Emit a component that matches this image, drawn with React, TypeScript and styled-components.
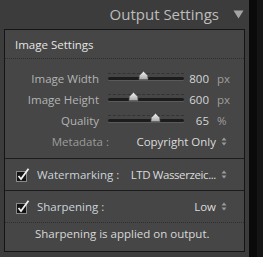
import React from "react";
import styled, { createGlobalStyle } from "styled-components";

const GlobalStyle = createGlobalStyle`
  html, body {
    margin: 0;
    padding: 0;
    background: #3c3c3c;
  }
  body {
    font-family: "Open Sans", "Liberation Sans", sans-serif;
  }
`;

const sliders = [
  { label: "Image Width", value: "800", unit: "px", pos: 0.46 },
  { label: "Image Height", value: "600", unit: "px", pos: 0.33 },
  { label: "Quality", value: "65", unit: "%", pos: 0.62 },
];

const Thumb = () => (
  <svg width="11" height="9" viewBox="0 0 11 9">
    <defs>
      <linearGradient id="tg" x1="0" y1="0" x2="0" y2="1">
        <stop offset="0" stopColor="#f4f4f4" />
        <stop offset="1" stopColor="#a8a8a8" />
      </linearGradient>
    </defs>
    <path d="M5.5 0.5 L9.5 4.5 L10 8.5 L1 8.5 L1.5 4.5 Z" fill="url(#tg)" stroke="#6a6a6a" strokeWidth="0.6" />
  </svg>
);

const Arrows = () => (
  <svg width="6" height="9" viewBox="0 0 6 9">
    <path d="M3 0.5 L5.5 3.5 L0.5 3.5 Z" fill="#9a9a9a" />
    <path d="M3 8.5 L5.5 5.5 L0.5 5.5 Z" fill="#9a9a9a" />
  </svg>
);

const Check = () => (
  <svg width="14" height="14" viewBox="0 0 14 14">
    <rect x="0.5" y="3.5" width="10" height="10" fill="#141414" stroke="#8a8a8a" />
    <path d="M2.5 8 L5 11 L12.5 0.8" fill="none" stroke="#f0f0f0" strokeWidth="1.8" />
  </svg>
);

const App = () => {
  return (
    <>
      <GlobalStyle />
      <Page>
        <Main>
          <Header>
            <HeaderTitle>Output Settings</HeaderTitle>
            <svg width="11" height="9" viewBox="0 0 11 9">
              <path d="M0.5 0.5 L10.5 0.5 L5.5 8.5 Z" fill="#a4a4a4" />
            </svg>
          </Header>
          <Panel>
            <SectionTitle>Image Settings</SectionTitle>
            <SliderGroup>
              {sliders.map((s) => (
                <SliderRow key={s.label}>
                  <Label>{s.label}</Label>
                  <Track>
                    <Groove />
                    <ThumbWrap style={{ left: `${s.pos * 100}%` }}>
                      <Thumb />
                    </ThumbWrap>
                  </Track>
                  <Value>{s.value}</Value>
                  <Unit>{s.unit}</Unit>
                </SliderRow>
              ))}
              <MetaRow>
                <MetaLabel>Metadata :</MetaLabel>
                <Select>
                  Copyright Only <Arrows />
                </Select>
              </MetaRow>
            </SliderGroup>
            <CheckRow>
              <Check />
              <CheckLabel>Watermarking :</CheckLabel>
              <Select $tight>
                LTD Wasserzeic... <Arrows />
              </Select>
            </CheckRow>
            <CheckRow $dotted>
              <Check />
              <CheckLabel>Sharpening :</CheckLabel>
              <Select>
                Low <Arrows />
              </Select>
            </CheckRow>
            <Note>Sharpening is applied on output.</Note>
          </Panel>
        </Main>
        <Strip />
      </Page>
    </>
  );
};

const Page = styled.div`
  display: flex;
  width: 263px;
  height: 257px;
  overflow: hidden;
`;

const Main = styled.div`
  width: 241px;
  padding: 0 4px 5px 4px;
  background: #3c3c3c;
  display: flex;
  flex-direction: column;
`;

const Strip = styled.div`
  flex: 1;
  background: linear-gradient(to right, #0a0a0a 0, #0a0a0a 8px, #151515 8px);
`;

const Header = styled.div`
  height: 29px;
  display: flex;
  align-items: center;
  justify-content: flex-end;
  gap: 14px;
  padding-right: 1px;
  padding-bottom: 1px;
  box-sizing: border-box;
`;

const HeaderTitle = styled.span`
  font-size: 15px;
  color: #bdbdbd;
`;

const Panel = styled.div`
  flex: 1;
  border: 1px solid #151515;
  background: #464646;
  display: flex;
  flex-direction: column;
`;

const SectionTitle = styled.div`
  height: 29px;
  padding-left: 10px;
  display: flex;
  align-items: center;
  font-size: 11.5px;
  color: #e4e4e4;
  border-bottom: 1px dotted #2e2e2e;
  box-sizing: border-box;
`;

const SliderGroup = styled.div`
  padding: 9px 0 6px;
  display: flex;
  flex-direction: column;
  border-bottom: 1px solid #1c1c1c;
`;

const SliderRow = styled.div`
  display: grid;
  grid-template-columns: 94px 85px 25px auto;
  align-items: center;
  height: 21px;
  font-size: 11.5px;
`;

const Label = styled.div`
  text-align: right;
  color: #b4b4b4;
  white-space: nowrap;
`;

const Track = styled.div`
  position: relative;
  height: 12px;
  margin-left: 9px;
  width: 76px;
  border-top: 1px dashed #333;
  box-sizing: border-box;
`;

const Groove = styled.div`
  position: absolute;
  left: 0;
  right: 0;
  top: 3px;
  height: 3px;
  border-radius: 2px;
  background: #1c1c1c;
  box-shadow: 0 1px 0 #5a5a5a;
`;

const ThumbWrap = styled.div`
  position: absolute;
  top: -3px;
  transform: translateX(-5px);
  line-height: 0;
`;

const Value = styled.div`
  text-align: right;
  color: #d6d6d6;
`;

const Unit = styled.div`
  color: #9e9e9e;
  padding-left: 8px;
`;

const MetaRow = styled.div`
  display: flex;
  align-items: center;
  height: 21px;
  font-size: 11.5px;
`;

const MetaLabel = styled.div`
  width: 104px;
  text-align: right;
  color: #9c9c9c;
`;

const Select = styled.div<{ $tight?: boolean }>`
  margin-left: auto;
  margin-right: 17px;
  display: flex;
  align-items: center;
  gap: 5px;
  color: #dcdcdc;
  font-size: 11.5px;
  letter-spacing: ${(p) => (p.$tight ? "-0.4px" : "0")};
  white-space: nowrap;
  flex-shrink: 0;
`;

const CheckRow = styled.div<{ $dotted?: boolean }>`
  height: 32px;
  display: flex;
  align-items: center;
  padding-left: 11px;
  box-sizing: border-box;
  border-bottom: ${(p) => (p.$dotted ? "1px dotted #2e2e2e" : "1px solid #1c1c1c")};
  gap: 7px;
`;

const CheckLabel = styled.div`
  font-size: 11.5px;
  color: #ccd3da;
  white-space: nowrap;
  flex-shrink: 0;
`;

const Note = styled.div`
  padding: 3px 0 0 30px;
  font-size: 11.5px;
  color: #d8d8d8;
`;

export default App;
